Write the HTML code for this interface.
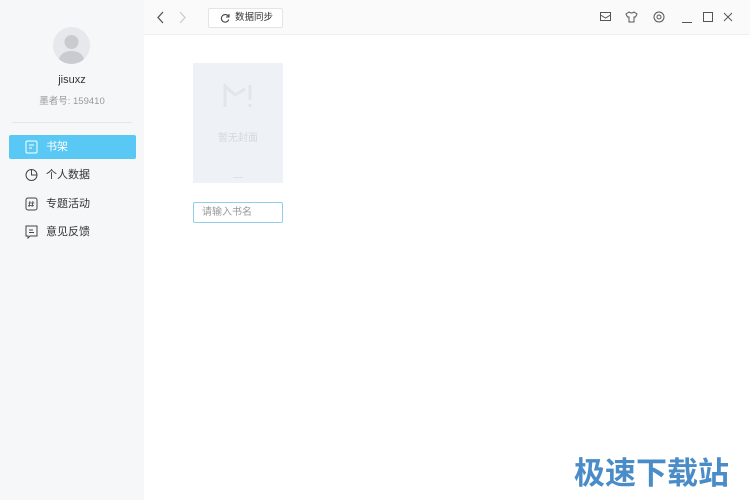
<!DOCTYPE html>
<html><head><meta charset="utf-8"><style>
*{margin:0;padding:0;box-sizing:border-box}
body{width:750px;height:500px;overflow:hidden;background:#fff;font-family:"Liberation Sans","Noto Sans CJK SC",sans-serif;position:relative}
.side{position:absolute;left:0;top:0;width:144px;height:500px;background:#f5f7f9}
.top{position:absolute;left:144px;top:0;width:606px;height:35px;background:#fafafa;border-bottom:1px solid #eef0f2}
.abs{position:absolute}
.nav{position:absolute;left:9px;width:127px;height:24px;font-size:11px;color:#333;line-height:24px;padding-left:37px}
.nav svg{position:absolute;left:16px;top:5px}
</style></head><body>
<div class="side">
 <div class="abs" style="left:53px;top:27px;width:37px;height:37px;border-radius:50%;background:#e6e8eb;overflow:hidden">
  <svg width="37" height="37"><circle cx="18.5" cy="15" r="7" fill="#c8ccd1"/><path d="M5 37 Q6 24 18.5 24 Q31 24 32 37Z" fill="#c8ccd1"/></svg>
 </div>
 <div class="abs" style="left:0;width:144px;top:74px;text-align:center;font-size:11px;color:#333">jisuxz</div>
 <div class="abs" style="left:0;width:144px;top:93px;text-align:center;font-size:9.5px;color:#999">墨者号: 159410</div>
 <div class="abs" style="left:12px;top:122px;width:120px;height:1px;background:#e4e6e9"></div>
 <div class="nav" style="top:135px;background:#5ac8f5;color:#fff;border-radius:2px"><svg width="13" height="14"><rect x="1" y="1" width="11" height="12" rx="1.5" fill="none" stroke="#fff"/><path d="M4 5h5M4 8h3" stroke="#fff"/></svg>书架</div>
 <div class="nav" style="top:163px"><svg width="13" height="14"><circle cx="6.5" cy="7" r="5.5" fill="none" stroke="#444"/><path d="M6.5 1.5V7H12" fill="none" stroke="#444"/></svg>个人数据</div>
 <div class="nav" style="top:192px"><svg width="13" height="14"><rect x="1" y="1" width="11" height="12" rx="2" fill="none" stroke="#444"/><path d="M5 4l-1 6M8 4l-1 6M3.5 6h6M3 8.5h6" stroke="#444" stroke-width=".8"/></svg>专题活动</div>
 <div class="nav" style="top:220px"><svg width="13" height="14"><path d="M1 1h11v10H5l-2 2v-2H1z" fill="none" stroke="#444"/><path d="M4 5h4M4 7.5h5" stroke="#444"/></svg>意见反馈</div>
</div>
<div class="top">
 <svg class="abs" style="left:12px;top:11px" width="10" height="13"><path d="M7 1L2 6.5 7 12" fill="none" stroke="#555" stroke-width="1.3"/></svg>
 <svg class="abs" style="left:33px;top:11px" width="10" height="13"><path d="M3 1l5 5.5L3 12" fill="none" stroke="#ccc" stroke-width="1.3"/></svg>
 <div class="abs" style="left:64px;top:8px;width:75px;height:20px;background:#fff;border:1px solid #e2e4e7;border-radius:2px;font-size:9.5px;color:#333;line-height:18px;padding-left:26px">数据同步
  <svg class="abs" style="left:11px;top:4px" width="10" height="10"><path d="M8.5 3.5A3.8 3.8 0 1 0 8.8 6.5" fill="none" stroke="#444" stroke-width="1.1"/><path d="M9 1v3H6" fill="none" stroke="#444" stroke-width="1.1"/></svg></div>
 <svg class="abs" style="left:456px;top:12px" width="11" height="10"><rect x=".5" y=".5" width="10" height="8" fill="none" stroke="#555"/><path d="M.5 3l5 3 5-3" fill="none" stroke="#555"/></svg>
 <svg class="abs" style="left:481px;top:11px" width="13" height="12"><path d="M4 1L1 3l1.5 3H4v5h5V6h1.5L12 3 9 1Q6.5 3 4 1z" fill="none" stroke="#555"/></svg>
 <svg class="abs" style="left:509px;top:11px" width="12" height="12"><circle cx="6" cy="6" r="5" fill="none" stroke="#555"/><circle cx="6" cy="6" r="2" fill="none" stroke="#555"/></svg>
 <div class="abs" style="left:538px;top:22px;width:10px;height:1px;background:#555"></div>
 <div class="abs" style="left:559px;top:12px;width:10px;height:10px;border:1px solid #555"></div>
 <svg class="abs" style="left:579px;top:12px" width="10" height="10"><path d="M1 1l8 8M9 1L1 9" stroke="#555"/></svg>
</div>
<div class="abs" style="left:193px;top:63px;width:90px;height:120px;background:#eef1f5">
 <svg class="abs" style="left:30px;top:20px" width="30" height="26"><path d="M2 24V3l10 9 10-6" fill="none" stroke="#e2e6ec" stroke-width="3"/><path d="M27 2v15M27 21v3" stroke="#e2e6ec" stroke-width="3"/></svg>
 <div class="abs" style="left:0;width:90px;top:66px;text-align:center;font-size:10px;color:#d4d9df">暂无封面</div>
 <div class="abs" style="left:40px;top:114px;width:10px;height:1px;background:#dde1e6"></div>
</div>
<div class="abs" style="left:193px;top:202px;width:90px;height:21px;border:1px solid #8fd0e8;border-radius:2px;font-size:10px;color:#999;line-height:19px;padding-left:8px">请输入书名</div>
<div class="abs" style="left:574px;top:448px;font-size:31px;font-weight:bold;color:#4a8cc8;letter-spacing:0">极速下载站</div>
</body></html>
